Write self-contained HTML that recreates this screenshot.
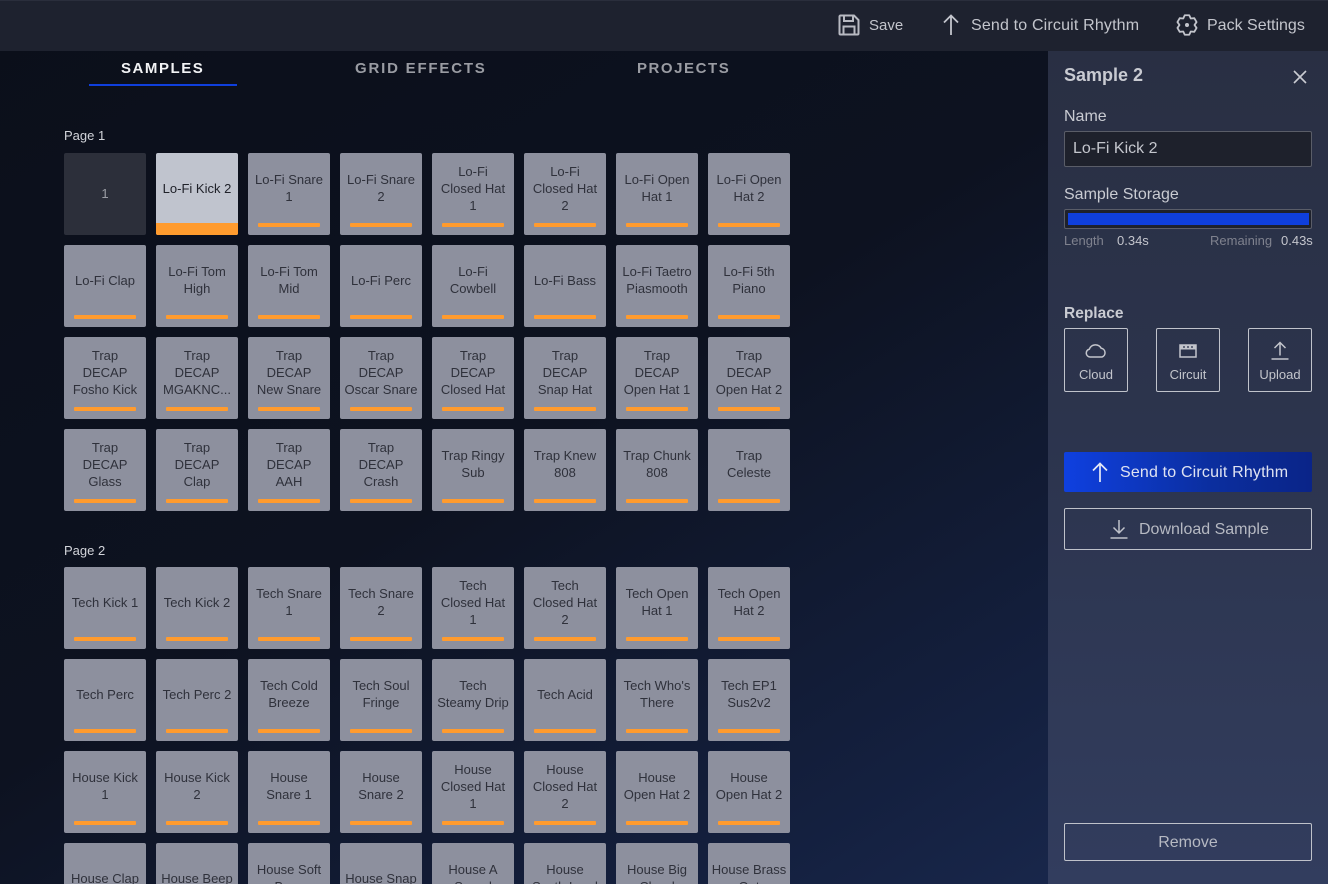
<!DOCTYPE html>
<html><head><meta charset="utf-8"><style>
*{box-sizing:border-box}
html,body{margin:0;padding:0;width:1330px;height:884px;overflow:hidden;background:#fff}
body{position:relative;font-family:"Liberation Sans",sans-serif}
#app{position:absolute;left:0;top:0;width:1328px;height:884px;overflow:hidden;background:linear-gradient(148deg,#0b0f1a 0%,#0d1220 45%,#14203f 78%,#1c2c54 100%)}
#hdr{position:absolute;left:0;top:0;width:1328px;height:51px;background:#1e222f;border-top:1px solid #2a2e3c}
.a{position:absolute;white-space:nowrap}
.h{font-size:16px;color:#c3c5cc;top:16px;line-height:18px}
svg{position:absolute;overflow:visible;fill:none}
.tab{font-size:15px;font-weight:bold;letter-spacing:1.55px;top:60px;line-height:18px;color:#9a9ca3}
.pg{font-size:13px;color:#d2d4da;left:64px;line-height:14px}
.grid{position:absolute;left:64px;display:grid;grid-template-columns:repeat(8,82px);grid-auto-rows:82px;gap:10px}
.t{position:relative;width:82px;height:82px;background:#8d909e;border-radius:2px;color:#2f313b;font-size:13px;line-height:17px;text-align:center}
.t span{position:absolute;left:0;right:0;top:0;height:70px;display:flex;align-items:center;justify-content:center;white-space:nowrap}
.t:after{content:"";position:absolute;left:10px;top:70px;width:62px;height:4px;background:#ff9b2e;border-radius:1px}
.t.d{background:#2c2f3a;color:#9b9da5}.t.d:after{display:none}.t.d span{height:80px}
.t.sel{background:#c0c4ce;color:#20222a}.t.sel:after{left:0;top:70px;width:82px;height:12px;border-radius:0 0 2px 2px}
#panel{position:absolute;left:1048px;top:51px;width:280px;height:833px;background:linear-gradient(180deg,#292f43 0%,#2c344d 45%,#323d5e 100%)}
.l{font-size:16px;color:#c9cbd2;line-height:18px}
.rb{position:absolute;top:328px;width:64px;height:64px;border:1px solid #c0c3cb;border-radius:2px;color:#c3c5cc;font-size:13px;text-align:center;padding-top:38px;line-height:16px}
.ob{position:absolute;left:1064px;width:248px;border:1px solid #bfc2ca;border-radius:2px;color:#b6b9c2;font-size:16px;line-height:18px}
.st{font-size:13px;line-height:15px;top:233px}
</style></head><body><div id="app">
<div id="hdr"></div>
<svg style="left:838px;top:14px" width="22" height="22" viewBox="0 0 22 22" stroke="#b8bac2" stroke-width="2"><path d="M1.500 2.500a1 1 0 0 1 1-1H16l4.500 4.500V19.500a1 1 0 0 1-1 1H2.500a1 1 0 0 1-1-1Z"/><path d="M6 1.500V7H15V1.500M5.500 20.500V12.500H16.500V20.500"/></svg>
<div class="a h" style="left:869px;font-size:15px;top:17px">Save</div>
<svg style="left:943px;top:14px" width="16" height="22" viewBox="0 0 16 22" stroke="#c3c5cc" stroke-width="1.800"><path d="M8 21V1.500M1 8.500 8 1.500 15 8.500"/></svg>
<div class="a h" style="left:971px;letter-spacing:.17px;top:17px">Send to Circuit Rhythm</div>
<svg style="left:1176px;top:14px" width="22" height="22" viewBox="0 0 22 22" stroke="#c3c5cc" stroke-width="1.800" stroke-linejoin="round"><path d="M8.750 1.260H13.250L14.750 4.500 18.310 4.180 20.560 8.080 18.500 11 20.560 13.920 18.310 17.820 14.750 17.500 13.250 20.740H8.750L7.250 17.500 3.690 17.820 1.440 13.920 3.500 11 1.440 8.080 3.690 4.180 7.250 4.500Z"/><circle cx="11" cy="11" r="2" fill="#c3c5cc" stroke="none"/></svg>
<div class="a h" style="left:1207px;top:17px">Pack Settings</div>

<div class="a tab" style="left:121px;color:#f2f3f5">SAMPLES</div>
<div class="a" style="left:89px;top:84px;width:148px;height:2px;background:#0f3fdc"></div>
<div class="a tab" style="left:355px;letter-spacing:1.800px">GRID EFFECTS</div>
<div class="a tab" style="left:637px">PROJECTS</div>

<div class="a pg" style="top:129px">Page 1</div>
<div class="grid" style="top:153px">
<div class="t d"><span>1</span></div>
<div class="t sel"><span>Lo-Fi Kick 2</span></div>
<div class="t"><span>Lo-Fi Snare<br>1</span></div>
<div class="t"><span>Lo-Fi Snare<br>2</span></div>
<div class="t"><span>Lo-Fi<br>Closed Hat<br>1</span></div>
<div class="t"><span>Lo-Fi<br>Closed Hat<br>2</span></div>
<div class="t"><span>Lo-Fi Open<br>Hat 1</span></div>
<div class="t"><span>Lo-Fi Open<br>Hat 2</span></div>
<div class="t"><span>Lo-Fi Clap</span></div>
<div class="t"><span>Lo-Fi Tom<br>High</span></div>
<div class="t"><span>Lo-Fi Tom<br>Mid</span></div>
<div class="t"><span>Lo-Fi Perc</span></div>
<div class="t"><span>Lo-Fi<br>Cowbell</span></div>
<div class="t"><span>Lo-Fi Bass</span></div>
<div class="t"><span>Lo-Fi Taetro<br>Piasmooth</span></div>
<div class="t"><span>Lo-Fi 5th<br>Piano</span></div>
<div class="t"><span>Trap<br>DECAP<br>Fosho Kick</span></div>
<div class="t"><span>Trap<br>DECAP<br>MGAKNC...</span></div>
<div class="t"><span>Trap<br>DECAP<br>New Snare</span></div>
<div class="t"><span>Trap<br>DECAP<br>Oscar Snare</span></div>
<div class="t"><span>Trap<br>DECAP<br>Closed Hat</span></div>
<div class="t"><span>Trap<br>DECAP<br>Snap Hat</span></div>
<div class="t"><span>Trap<br>DECAP<br>Open Hat 1</span></div>
<div class="t"><span>Trap<br>DECAP<br>Open Hat 2</span></div>
<div class="t"><span>Trap<br>DECAP<br>Glass</span></div>
<div class="t"><span>Trap<br>DECAP<br>Clap</span></div>
<div class="t"><span>Trap<br>DECAP<br>AAH</span></div>
<div class="t"><span>Trap<br>DECAP<br>Crash</span></div>
<div class="t"><span>Trap Ringy<br>Sub</span></div>
<div class="t"><span>Trap Knew<br>808</span></div>
<div class="t"><span>Trap Chunk<br>808</span></div>
<div class="t"><span>Trap<br>Celeste</span></div>
</div>

<div class="a pg" style="top:544px">Page 2</div>
<div class="grid" style="top:567px">
<div class="t"><span>Tech Kick 1</span></div>
<div class="t"><span>Tech Kick 2</span></div>
<div class="t"><span>Tech Snare<br>1</span></div>
<div class="t"><span>Tech Snare<br>2</span></div>
<div class="t"><span>Tech<br>Closed Hat<br>1</span></div>
<div class="t"><span>Tech<br>Closed Hat<br>2</span></div>
<div class="t"><span>Tech Open<br>Hat 1</span></div>
<div class="t"><span>Tech Open<br>Hat 2</span></div>
<div class="t"><span>Tech Perc</span></div>
<div class="t"><span>Tech Perc 2</span></div>
<div class="t"><span>Tech Cold<br>Breeze</span></div>
<div class="t"><span>Tech Soul<br>Fringe</span></div>
<div class="t"><span>Tech<br>Steamy Drip</span></div>
<div class="t"><span>Tech Acid</span></div>
<div class="t"><span>Tech Who's<br>There</span></div>
<div class="t"><span>Tech EP1<br>Sus2v2</span></div>
<div class="t"><span>House Kick<br>1</span></div>
<div class="t"><span>House Kick<br>2</span></div>
<div class="t"><span>House<br>Snare 1</span></div>
<div class="t"><span>House<br>Snare 2</span></div>
<div class="t"><span>House<br>Closed Hat<br>1</span></div>
<div class="t"><span>House<br>Closed Hat<br>2</span></div>
<div class="t"><span>House<br>Open Hat 2</span></div>
<div class="t"><span>House<br>Open Hat 2</span></div>
<div class="t"><span>House Clap</span></div>
<div class="t"><span>House Beep</span></div>
<div class="t"><span>House Soft<br>Bass</span></div>
<div class="t"><span>House Snap</span></div>
<div class="t"><span>House A<br>Sound</span></div>
<div class="t"><span>House<br>Synth Lead</span></div>
<div class="t"><span>House Big<br>Chord</span></div>
<div class="t"><span>House Brass<br>Out</span></div>
</div>

<div id="panel"></div>
<div class="a" style="left:1064px;top:64px;font-size:18px;font-weight:bold;color:#c9cbd2;line-height:22px">Sample 2</div>
<svg style="left:1293px;top:70px" width="14" height="14" viewBox="0 0 14 14" stroke="#c9cbd2" stroke-width="1.600"><path d="M1 1 13 13M13 1 1 13"/></svg>
<div class="a l" style="left:1064px;top:108px">Name</div>
<div class="a" style="left:1064px;top:131px;width:248px;height:36px;background:#1e212c;border:1px solid #5a5d68;border-radius:2px;color:#c4c6cd;font-size:16px;line-height:34px;padding-left:8px">Lo-Fi Kick 2</div>
<div class="a l" style="left:1064px;top:186px">Sample Storage</div>
<div class="a" style="left:1064px;top:209px;width:248px;height:20px;background:#1e212c;border:1px solid #5a5d68;border-radius:2px"></div>
<div class="a" style="left:1068px;top:213px;width:241px;height:12px;background:#0f3fdc"></div>
<div class="a st" style="left:1064px;color:#7f828e">Length</div>
<div class="a st" style="left:1117px;color:#c4c6cd">0.34s</div>
<div class="a st" style="left:1210px;color:#7f828e">Remaining</div>
<div class="a st" style="left:1281px;color:#c4c6cd">0.43s</div>
<div class="a" style="left:1064px;top:305px;font-size:15.500px;font-weight:bold;line-height:18px;color:#c9cbd2">Replace</div>

<div class="rb" style="left:1064px">Cloud</div>
<svg style="left:1085px;top:344px" width="22" height="14" viewBox="0 0 22 14" stroke="#c3c5cc" stroke-width="1.500"><path d="M6 13H5a4 4 0 0 1-.6-7.900A6.500 6.500 0 0 1 16.200 4.300 4.500 4.500 0 0 1 17 13Z"/></svg>
<div class="rb" style="left:1156px">Circuit</div>
<svg style="left:1179px;top:344px" width="18" height="14" viewBox="0 0 18 14"><path d="M1 1H17V13H1Z" stroke="#c3c5cc" stroke-width="1.500"/><path d="M1 1H17V5.500H1Z" fill="#c3c5cc"/><path d="M5 2V4M9 2V4M13 2V4" stroke="#2d354e" stroke-width="1.300"/></svg>
<div class="rb" style="left:1248px">Upload</div>
<svg style="left:1271px;top:341px" width="18" height="19" viewBox="0 0 18 19" stroke="#c3c5cc" stroke-width="1.500"><path d="M9 14.500V1.500M3.500 7 9 1.500 14.500 7M.5 18H17.500"/></svg>

<div class="a" style="left:1064px;top:452px;width:248px;height:40px;background:linear-gradient(90deg,#0f40e0 0%,#0b2e9e 60%,#0a2488 100%);border-radius:2px"></div>
<svg style="left:1092px;top:462px" width="16" height="20" viewBox="0 0 16 20" stroke="#e6e9f5" stroke-width="1.700"><path d="M8 20V1.500M1 8.500 8 1.500 15 8.500"/></svg>
<div class="a" style="left:1120px;top:464px;font-size:16px;letter-spacing:.17px;line-height:18px;color:#dfe3f2">Send to Circuit Rhythm</div>

<div class="ob" style="top:508px;height:42px"></div>
<svg style="left:1110px;top:519px" width="18" height="20" viewBox="0 0 18 20" stroke="#bfc2ca" stroke-width="1.500"><path d="M9 1V14M3.500 8.500 9 14 14.500 8.500M.5 19H17.500"/></svg>
<div class="a" style="left:1139px;top:521px;font-size:16px;line-height:18px;color:#b6b9c2">Download Sample</div>

<div class="ob" style="top:823px;height:38px;text-align:center;line-height:38px">Remove</div>
</div></body></html>
